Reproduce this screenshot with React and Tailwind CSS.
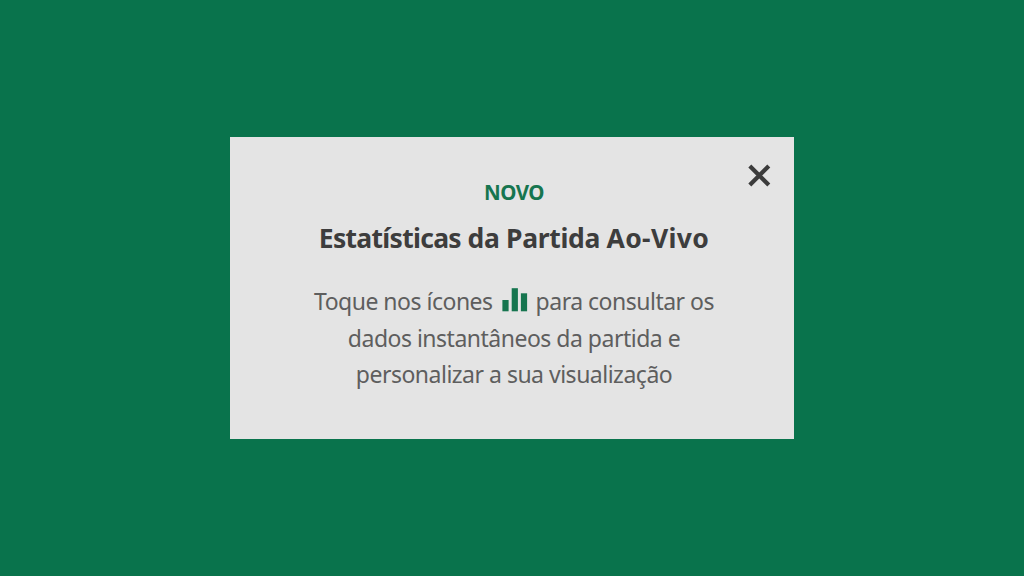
function BarsIcon() {
  return (
    <svg width="26" height="24" viewBox="0 0 26 24" fill="#16754f" className="mt-[5px] ml-[9px] mr-2 shrink-0" aria-hidden="true">
      <rect x="0.4" y="12" width="6.2" height="11.3" />
      <rect x="9.7" y="0.2" width="6.2" height="23.1" />
      <rect x="18.9" y="5.3" width="6.2" height="18" />
    </svg>
  );
}

export default function App() {
  return (
    <main className="flex h-[576px] w-full items-center justify-center bg-[#09734c] font-['Noto_Sans',sans-serif]">
      <section className="flex h-[302px] w-[564px] items-start bg-[#e4e4e4] pt-[26px]">
        <div className="ml-[60px] mt-[15px] flex w-[448px] flex-col items-center whitespace-nowrap">
          <p className="text-[20.5px] leading-7 font-bold tracking-[-0.5px] text-[#16754f]">NOVO</p>
          <h1 className="mt-[14px] text-[26.5px] leading-9 font-bold tracking-[-0.33px] text-[#3d3d3d]">
            <span className="tracking-[-0.7px]">Estatísticas</span> da Partida <span className="tracking-[0.35px]">Ao-Vivo</span>
          </h1>
          <div className="mt-[27px] flex flex-col items-center text-[23px] leading-[36.2px] tracking-[-0.5px] text-[#5e5e5e]">
            <p className="flex h-[37px] items-start">
              <span>Toque nos ícones</span>
              <BarsIcon />
              <span>para consultar os</span>
            </p>
            <p>dados instantâneos da partida e</p>
            <p>personalizar a sua visualização</p>
          </div>
        </div>
        <button aria-label="Fechar" className="ml-[9px]">
          <svg width="26" height="26" viewBox="0 0 26 26" stroke="#3b3b3b" strokeWidth="4.2" fill="none">
            <path d="M2.8 3 21.8 22M21.8 3 2.8 22" />
          </svg>
        </button>
      </section>
    </main>
  );
}
